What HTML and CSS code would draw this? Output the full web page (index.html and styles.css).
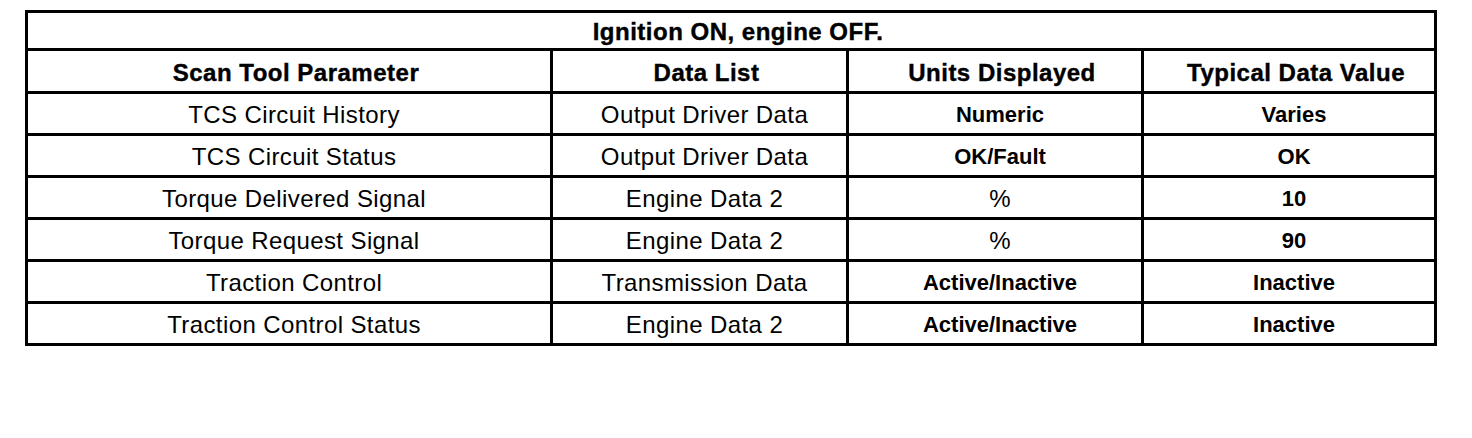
FILE: index.html
```html
<!DOCTYPE html>
<html>
<head>
<meta charset="utf-8">
<link rel="stylesheet" href="styles.css">
</head>
<body>
<div class="page">
<table class="data">
<colgroup>
<col class="c1"><col class="c2"><col class="c3"><col class="c4">
</colgroup>
<thead>
<tr class="title"><th colspan="4">Ignition ON, engine OFF.</th></tr>
<tr class="head"><th>Scan Tool Parameter</th><th>Data List</th><th>Units Displayed</th><th>Typical Data Value</th></tr>
</thead>
<tbody>
<tr><td>TCS Circuit History</td><td>Output Driver Data</td><td class="val">Numeric</td><td class="val">Varies</td></tr>
<tr><td>TCS Circuit Status</td><td>Output Driver Data</td><td class="val">OK/Fault</td><td class="val">OK</td></tr>
<tr><td>Torque Delivered Signal</td><td>Engine Data 2</td><td class="val pct">%</td><td class="val">10</td></tr>
<tr><td>Torque Request Signal</td><td>Engine Data 2</td><td class="val pct">%</td><td class="val">90</td></tr>
<tr><td>Traction Control</td><td>Transmission Data</td><td class="val">Active/Inactive</td><td class="val">Inactive</td></tr>
<tr><td>Traction Control Status</td><td>Engine Data 2</td><td class="val">Active/Inactive</td><td class="val">Inactive</td></tr>
</tbody>
</table>
</div>
</body>
</html>
```
FILE: styles.css
```css
html, body {
  margin: 0;
  padding: 0;
  background: #fff;
}
.page {
  padding: 10px 0 0 25px;
}
.data {
  border-collapse: collapse;
  width: 1409px;
  table-layout: fixed;
  font-family: "Liberation Sans", Arial, sans-serif;
  color: #000;
  border: 3px solid #000;
}
.c1 { width: 525px; }
.c2 { width: 296px; }
.c3 { width: 295px; }
.c4 { width: 293px; }
.data th, .data td {
  border: 3px solid #000;
  text-align: center;
  padding: 3px 0 0 10px;
  font-size: 24px;
  line-height: 26px;
  letter-spacing: 0.4px;
}
.data th {
  font-weight: bold;
  letter-spacing: 0.5px;
  -webkit-text-stroke: 0.4px #000;
  padding-left: 14px;
}
.data td.val {
  font-weight: bold;
  font-size: 22px;
  letter-spacing: 0;
}
.data td.pct {
  font-weight: normal;
  font-size: 24px;
}
.title th { height: 32px; }
.head th { height: 37px; }
.data td { height: 36px; }
```
